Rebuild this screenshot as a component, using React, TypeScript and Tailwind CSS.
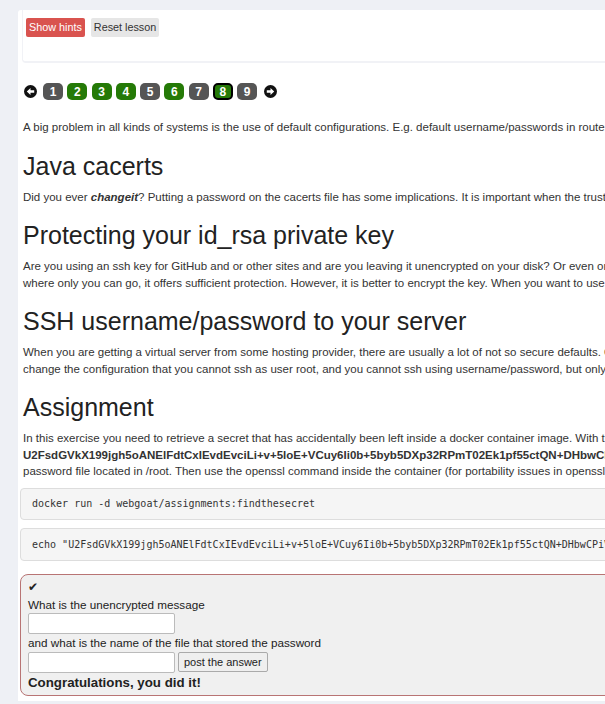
const SECRET =
  "U2FsdGVkX199jgh5oANElFdtCxIEvdEvciLi+v+5loE+VCuy6Ii0b+5byb5DXp32RPmT02Ek1pf55ctQN+DHbwCPiVRfFQamDmbHBUpD7as=";

const ArrowCircle = ({ dir }: { dir: "left" | "right" }) => (
  <svg width="13" height="13" viewBox="0 0 14 14" className="shrink-0">
    <circle cx="7" cy="7" r="7" fill="#111" />
    {dir === "left" ? (
      <path d="M3 7 L7 3.2 L7 5.6 L11 5.6 L11 8.4 L7 8.4 L7 10.8 Z" fill="#fff" />
    ) : (
      <path d="M11 7 L7 3.2 L7 5.6 L3 5.6 L3 8.4 L7 8.4 L7 10.8 Z" fill="#fff" />
    )}
  </svg>
);

const pages = [
  { n: 1, solved: false },
  { n: 2, solved: true },
  { n: 3, solved: true },
  { n: 4, solved: true },
  { n: 5, solved: false },
  { n: 6, solved: true },
  { n: 7, solved: false },
  { n: 8, solved: true, current: true },
  { n: 9, solved: false },
];

const H2 = ({ children }: { children: React.ReactNode }) => (
  <h2 className="mt-[17px] mb-[9px] text-[25px] leading-[27px] text-[#222] whitespace-nowrap">{children}</h2>
);

const P = ({ children }: { children: React.ReactNode }) => (
  <p className="mb-[8px] text-[11.5px] leading-[16.5px] text-[#333] whitespace-nowrap">{children}</p>
);

export default function App() {
  return (
    <div className="w-[605px] h-[704px] overflow-hidden bg-[#eef0f5] font-['Liberation_Sans',Arial,sans-serif]">
      <div className="ml-[18px] mt-[10px] w-[1200px] bg-white rounded-tl-[3px] pb-[5px]">
        {/* lesson toolbar */}
        <div className="mx-[4px] h-[53px] border-b-2 border-l border-[#f1f2f6] rounded-bl-[4px] pt-[8px] pl-[3px] flex items-start gap-[6px]">
          <button className="h-[19px] px-[3px] rounded-[2px] bg-[#d9534f] text-white text-[10.8px] leading-[19px]">Show hints</button>
          <button className="h-[19px] px-[3px] rounded-[2px] bg-[#e6e6e6] text-[#333] text-[10.8px] leading-[19px]">Reset lesson</button>
        </div>

        <div className="pl-[5px]">
          {/* pagination */}
          <div className="mt-[20px] flex items-center h-[17px]">
            <div className="ml-[1px] mr-[6px]">
              <ArrowCircle dir="left" />
            </div>
            <div className="flex gap-[4.25px]">
              {pages.map((p) => (
                <div
                  key={p.n}
                  className={`w-[20px] h-[17px] rounded-[5px] flex items-center justify-center text-white text-[12px] font-bold ${
                    p.solved ? "bg-[#257a07]" : "bg-[#555]"
                  } ${p.current ? "border-2 border-black" : ""}`}
                >
                  {p.n}
                </div>
              ))}
            </div>
            <div className="ml-[7px]">
              <ArrowCircle dir="right" />
            </div>
          </div>

          <div className="mt-[19px]">
            <P>
              A big problem in all kinds of systems is the use of default configurations. E.g. default username/passwords in routers, default passwords for databases, default settings in cloud storage, etc.
            </P>

            <H2>Java cacerts</H2>
            <P>
              Did you ever <b><i>changeit</i></b>? Putting a password on the cacerts file has some implications. It is important when the trusted certificate authorities need to be protected and an unknown self signed certificate would be added.
            </P>

            <H2>Protecting your id_rsa private key</H2>
            <P>
              Are you using an ssh key for GitHub and or other sites and are you leaving it unencrypted on your disk? Or even on your cloud drive? If the key is stored in a place
              <br />
              where only you can go, it offers sufficient protection. However, it is better to encrypt the key. When you want to use the key, you would have to provide the password again.
            </P>

            <H2>SSH username/password to your server</H2>
            <P>
              When you are getting a virtual server from some hosting provider, there are usually a lot of not so secure defaults. One of these is that ssh to the server with the root user is possible. You should
              <br />
              change the configuration that you cannot ssh as user root, and you cannot ssh using username/password, but only with a key.
            </P>

            <H2>Assignment</H2>
            <P>
              In this exercise you need to retrieve a secret that has accidentally been left inside a docker container image. With this secret, you can decrypt the following message:
              <br />
              <b>{SECRET}</b>. You can decrypt the message by logging in to the running container and getting access to the
              <br />
              password file located in /root. Then use the openssl command inside the container (for portability issues in openssl on Windows/Mac/Linux)
            </P>
          </div>

          <div className="mt-[1px] mr-[2px] -ml-[3px]">
            <pre className="mb-[8px] h-[32px] px-[11px] border border-[#ddd] rounded-[4px] bg-[#f5f5f5] text-[10px] leading-[30px] text-[#333] font-['DejaVu_Sans_Mono',monospace]">
              docker run -d webgoat/assignments:findthesecret
            </pre>
            <pre className="h-[33px] px-[11px] border border-[#ddd] rounded-[4px] bg-[#f5f5f5] text-[10px] leading-[31px] text-[#333] font-['DejaVu_Sans_Mono',monospace]">
              echo "{SECRET}" | openssl enc -aes-256-cbc -d -a -kfile ....
            </pre>

            <div className="mt-[13px] border-[1.5px] border-[#b87474] rounded-[8px] bg-[#f0f0f0] pl-[7px] pt-[4px] pb-[4px] text-[11.7px] leading-[16px] text-[#222]">
              <div className="text-[12px] leading-[16px]">✔</div>
              <div className="mt-[2px]">What is the unencrypted message</div>
              <input className="block w-[147px] h-[21px] bg-white border border-[#bbb] rounded-[2px] px-1" />
              <div className="mt-[1px]">and what is the name of the file that stored the password</div>
              <div className="flex items-center gap-[3px] mt-[1px]">
                <input className="w-[147px] h-[21px] bg-white border border-[#bbb] rounded-[2px] px-1" />
                <button className="h-[20px] px-[5px] bg-[#efefef] border border-[#aaa] rounded-[2px] text-[11px] leading-[18px] text-[#222]">
                  post the answer
                </button>
              </div>
              <div className="mt-[2px] font-bold text-[13.3px]">Congratulations, you did it!</div>
            </div>
          </div>
        </div>
      </div>
    </div>
  );
}
